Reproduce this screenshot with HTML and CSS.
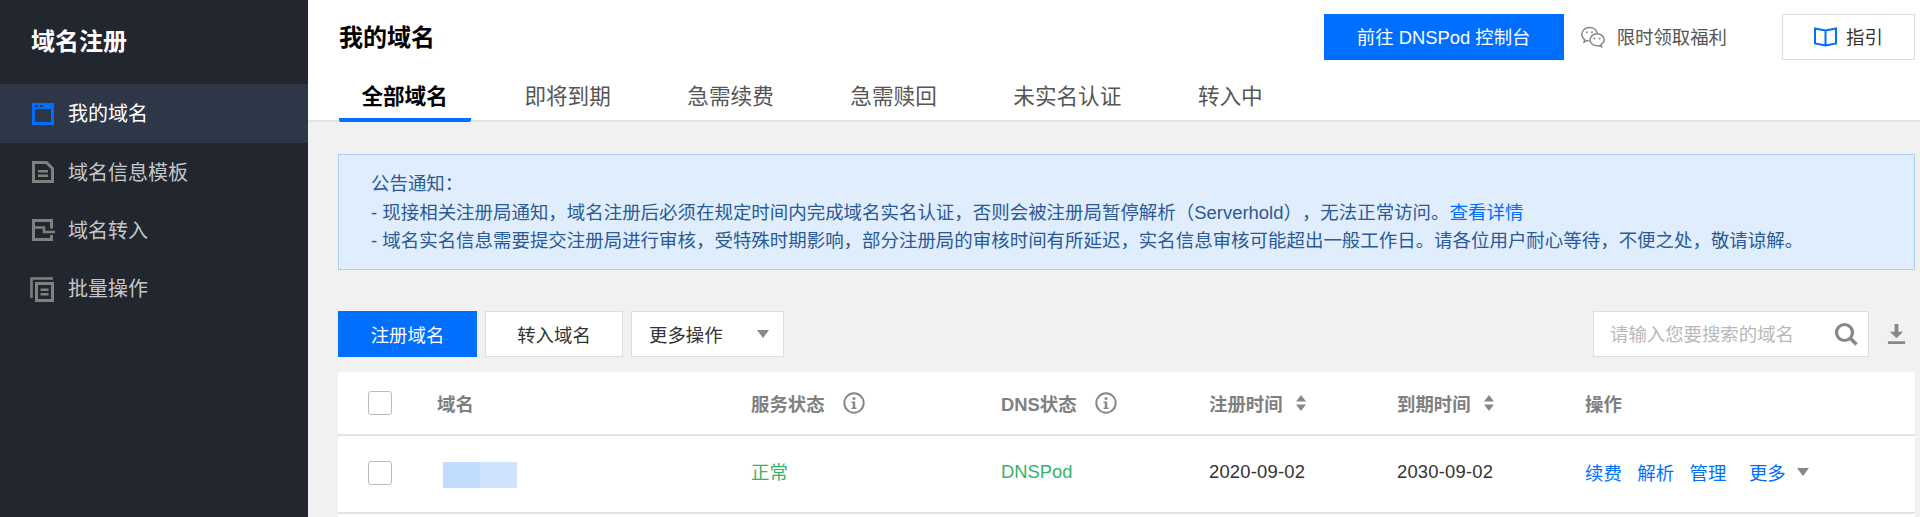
FILE: index.html
```html
<!DOCTYPE html>
<html lang="zh-CN">
<head>
<meta charset="utf-8">
<title>我的域名</title>
<link rel="stylesheet" href="styles.css">
</head>
<body>
<div class="app">
  <aside class="sidebar">
    <div class="brand">域名注册</div>
    <nav class="nav">
      <a class="nav-item active">
        <svg class="nav-icon" viewBox="0 0 22 22"><path fill="#006eff" d="M0 0h22v22H0z"/><path fill="#2e3748" d="M3 6h16v13H3z"/><path fill="#2e3748" d="M3 2h3v2H3zM8 2h3v2H8z"/></svg>
        <span>我的域名</span>
      </a>
      <a class="nav-item">
        <svg class="nav-icon" viewBox="0 0 22 22"><path fill="none" stroke="#808080" stroke-width="3" d="M1.5 1.5h13l6 6v13h-19z"/><path fill="#808080" d="M6 9h10v2.500H6zM6 13.500h10V16H6z"/></svg>
        <span>域名信息模板</span>
      </a>
      <a class="nav-item">
        <svg class="nav-icon" viewBox="0 0 22 22"><path fill="none" stroke="#808080" stroke-width="3" d="M19.500 9.500V1.500H1.500v19H19.500V16"/><path fill="none" stroke="#808080" stroke-width="2.500" d="M3 8.500H12V13H23"/></svg>
        <span>域名转入</span>
      </a>
      <a class="nav-item">
        <svg class="nav-icon" viewBox="0 0 22 22"><path fill="none" stroke="#808080" stroke-width="3" d="M4.500 6.500h16v17h-16z"/><path fill="none" stroke="#808080" stroke-width="2.500" d="M21 1.500H-.5V21"/><path fill="#808080" d="M8.500 11.500h8V14h-8zM8.500 16h8v2.500h-8z"/></svg>
        <span>批量操作</span>
      </a>
    </nav>
  </aside>
  <main class="main">
    <header class="head">
      <div class="head-top">
        <h1 class="title">我的域名</h1>
        <div class="head-actions">
          <a class="btn btn-primary btn-console">前往 DNSPod 控制台</a>
          <a class="gift">
            <svg class="gift-icon" viewBox="0 0 24 22"><path fill="none" stroke="#888" stroke-width="1.500" d="M16.500 7.500C15.500 3.800 12.500 1.500 8.500 1.500 4.300 1.500.8 4.500.8 8.300c0 2.200 1.100 4 2.900 5.200l-.6 2.500 2.800-1.400c.9.300 1.700.4 2.700.4"/><path fill="none" stroke="#888" stroke-width="1.500" d="M16 7.800c-3.900 0-7 2.700-7 6s3.100 6 7 6c.8 0 1.500-.1 2.200-.3l2.400 1.300-.5-2.200c1.900-1.100 3.100-2.800 3.100-4.800 0-3.300-3.100-6-7-6z"/><circle cx="5.800" cy="6.300" r="1" fill="#888"/><circle cx="11" cy="6.300" r="1" fill="#888"/><circle cx="13.400" cy="12.500" r="1" fill="#888"/><circle cx="18.600" cy="12.500" r="1" fill="#888"/></svg>
            <span class="gift-text">限时领取福利</span>
          </a>
          <a class="btn btn-guide">
            <svg class="book-icon" viewBox="0 0 23 20"><path fill="none" stroke="#006eff" stroke-width="2" d="M1 1.500l10.500 2 10.500-2v15l-10.500 2-10.500-2zM11.500 3.500v15"/></svg>
            <span>指引</span>
          </a>
        </div>
      </div>
      <div class="tabs">
        <a class="tab active">全部域名</a>
        <a class="tab">即将到期</a>
        <a class="tab">急需续费</a>
        <a class="tab">急需赎回</a>
        <a class="tab">未实名认证</a>
        <a class="tab">转入中</a>
      </div>
    </header>
    <section class="content">
      <div class="notice">
        <p>公告通知：</p>
        <p>- 现接相关注册局通知，域名注册后必须在规定时间内完成域名实名认证，否则会被注册局暂停解析（Serverhold），无法正常访问。<a class="notice-link">查看详情</a></p>
        <p>- 域名实名信息需要提交注册局进行审核，受特殊时期影响，部分注册局的审核时间有所延迟，实名信息审核可能超出一般工作日。请各位用户耐心等待，不便之处，敬请谅解。</p>
      </div>
      <div class="toolbar">
        <a class="btn btn-primary btn-register">注册域名</a>
        <a class="btn btn-plain btn-transfer">转入域名</a>
        <a class="btn btn-plain btn-select"><span>更多操作</span><i class="caret"></i></a>
        <div class="toolbar-right">
          <div class="search">
            <span class="placeholder">请输入您要搜索的域名</span>
            <svg class="search-icon" viewBox="0 0 24 24"><circle cx="10.500" cy="10.500" r="8" fill="none" stroke="#888" stroke-width="3.200"/><path stroke="#888" stroke-width="3.600" d="M16 16l6.500 6.500"/></svg>
          </div>
          <svg class="download-icon" viewBox="0 0 20 21"><path fill="#888" d="M8 0h4v8h5l-7 7-7-7h5zM1 18h18v3H1z"/></svg>
        </div>
      </div>
      <div class="table">
        <div class="row row-head">
          <span class="checkbox"></span>
          <span>域名</span>
          <span class="th">服务状态<svg class="info" viewBox="0 0 22 22"><circle cx="11" cy="11" r="9.700" fill="none" stroke="#888" stroke-width="2"/><circle cx="11" cy="6.500" r="1.500" fill="#888"/><path fill="#888" d="M8.500 9.500h3.700v6h1.300v1.500h-5v-1.500h1.300v-4.500H8.500z"/></svg></span>
          <span class="th">DNS状态<svg class="info" viewBox="0 0 22 22"><circle cx="11" cy="11" r="9.700" fill="none" stroke="#888" stroke-width="2"/><circle cx="11" cy="6.500" r="1.500" fill="#888"/><path fill="#888" d="M8.500 9.500h3.700v6h1.300v1.500h-5v-1.500h1.300v-4.500H8.500z"/></svg></span>
          <span class="th">注册时间<svg class="sort" viewBox="0 0 12 16"><path fill="#888" d="M6 0l5 6.500H1zM6 16L1 9.500h10z"/></svg></span>
          <span class="th">到期时间<svg class="sort" viewBox="0 0 12 16"><path fill="#888" d="M6 0l5 6.500H1zM6 16L1 9.500h10z"/></svg></span>
          <span>操作</span>
        </div>
        <div class="row row-body">
          <span class="checkbox"></span>
          <span class="masked"><i class="mask-a"></i><i class="mask-b"></i></span>
          <span class="ok ok-cn">正常</span>
          <span class="ok">DNSPod</span>
          <span class="date">2020-09-02</span>
          <span class="date">2030-09-02</span>
          <span class="ops"><a>续费</a><a>解析</a><a>管理</a><a class="ops-more">更多</a><i class="caret"></i></span>
        </div>
      </div>
    </section>
  </main>
</div>
</body>
</html>
```

FILE: styles.css
```css
* { box-sizing: border-box; }
html, body { margin: 0; height: 517px; overflow: hidden; }
body {
  font-family: "Liberation Sans", "Noto Sans CJK SC", sans-serif;
  font-size: 18.400px;
  color: #333;
  background: #f1f1f1;
  text-spacing-trim: space-all;
}
p, h1 { margin: 0; }
a { color: inherit; text-decoration: none; }

.app { display: flex; height: 517px; }

.sidebar { flex: 0 0 308px; background: #22262f; color: #c4c6c9; }
.brand {
  height: 84px;
  padding-left: 31px;
  line-height: 84px;
  font-size: 24px;
  font-weight: 700;
  color: #fff;
}
.nav-item {
  display: flex;
  align-items: center;
  gap: 14px;
  height: 58px;
  padding-left: 32px;
  font-size: 20px;
}
.nav-item span { margin-bottom: 2px; }
.nav-item.active { background: #2e3748; color: #fff; height: 59px; }
.nav-icon { width: 22px; height: 22px; overflow: visible; flex: none; }

.main { flex: 1; min-width: 0; }

.head { height: 122px; background: #fff; border-bottom: 2px solid #e2e2e2; }
.head-top {
  display: flex;
  justify-content: space-between;
  height: 74px;
  padding: 14px 5px 0 31px;
}
.title { font-size: 24px; font-weight: 700; color: #000; line-height: 48px; }
.head-actions { display: flex; align-items: flex-start; }

.btn {
  display: flex;
  align-items: center;
  justify-content: center;
  height: 46px;
  flex: none;
}
.btn-primary { background: #006eff; color: #fff; }
.btn-console { width: 240px; padding-bottom: 2px; }
.gift { display: flex; align-items: center; gap: 12px; height: 46px; margin: 0 55px 0 17px; color: #555; }
.gift-text { margin-bottom: 2px; }
.gift-icon { width: 24px; height: 22px; }
.btn-guide { width: 133px; gap: 9px; background: #fff; border: 1px solid #ddd; color: #333; }
.btn-guide span { margin-bottom: 2px; }
.book-icon { width: 23px; height: 20px; }

.tabs { display: flex; gap: 31px; padding-left: 30.600px; height: 46px; }
.tab {
  height: 48px;
  padding: 0 22.800px;
  line-height: 46px;
  font-size: 21.600px;
  color: #555;
  white-space: nowrap;
}
.tab.active { color: #000; font-weight: 700; border-bottom: 4px solid #006eff; border-radius: 2px; }

.content { padding: 32px 5px 0 30px; }

.notice {
  height: 116px;
  padding: 15px 32px 0;
  background: #e0edfd;
  border: 1px solid #a8cdf7;
  color: #2b5a94;
  font-size: 18.470px;
  line-height: 28.500px;
  white-space: nowrap;
}
.notice-link { color: #006eff; }

.toolbar { display: flex; align-items: center; gap: 8px; margin-top: 41px; height: 46px; }
.btn-register { width: 139px; }
.btn-plain { background: #fff; border: 1px solid #ddd; color: #333; }
.btn-transfer { width: 138px; }
.btn-select { width: 153px; justify-content: space-between; padding: 0 14px 0 17px; }
.caret {
  display: block;
  width: 0;
  height: 0;
  border-left: 6px solid transparent;
  border-right: 6px solid transparent;
  border-top: 8px solid #888;
}
.toolbar-right { display: flex; align-items: center; gap: 18px; margin-left: auto; padding-right: 9px; }
.search {
  display: flex;
  align-items: center;
  justify-content: space-between;
  width: 276px;
  height: 46px;
  padding: 0 10px 0 16px;
  background: #fff;
  border: 1px solid #ddd;
}
.placeholder { color: #b8b8b8; margin-bottom: 3px; }
.search-icon { width: 24px; height: 24px; }
.download-icon { width: 19px; height: 20px; }

.table { margin-top: 15px; min-height: 160px; background: #fff; }
.row {
  display: grid;
  grid-template-columns: 69px 314px 250px 208px 188px 188px 1fr;
  align-items: center;
  padding-left: 30px;
  border-bottom: 2px solid #e4e4e4;
}
.row-head { height: 64px; color: #808080; font-weight: 700; }
.row-body { height: 78px; padding-bottom: 3px; }
.th { display: flex; align-items: center; }
.info { width: 22px; height: 22px; margin-left: 18px; }
.sort { width: 12px; height: 16px; margin-left: 12px; }
.checkbox { width: 24px; height: 24px; background: #fff; border: 1.500px solid #bbb; border-radius: 3px; }
.masked { display: flex; margin: 5px 0 0 6px; height: 26px; }
.masked i { display: block; height: 26px; }
.mask-a { width: 37px; background: #c2dcff; }
.mask-b { width: 37px; background: #cfe3ff; }
.ok { color: #34b36b; margin-bottom: 2px; }
.ok-cn { margin-bottom: 4px; }
.date { color: #333; letter-spacing: .2px; margin-bottom: 2px; }
.ops { display: flex; align-items: center; color: #006eff; margin-bottom: 2px; }
.ops a { margin-right: 15.500px; }
.ops .ops-more { margin: 0 11px 0 7px; }
```
